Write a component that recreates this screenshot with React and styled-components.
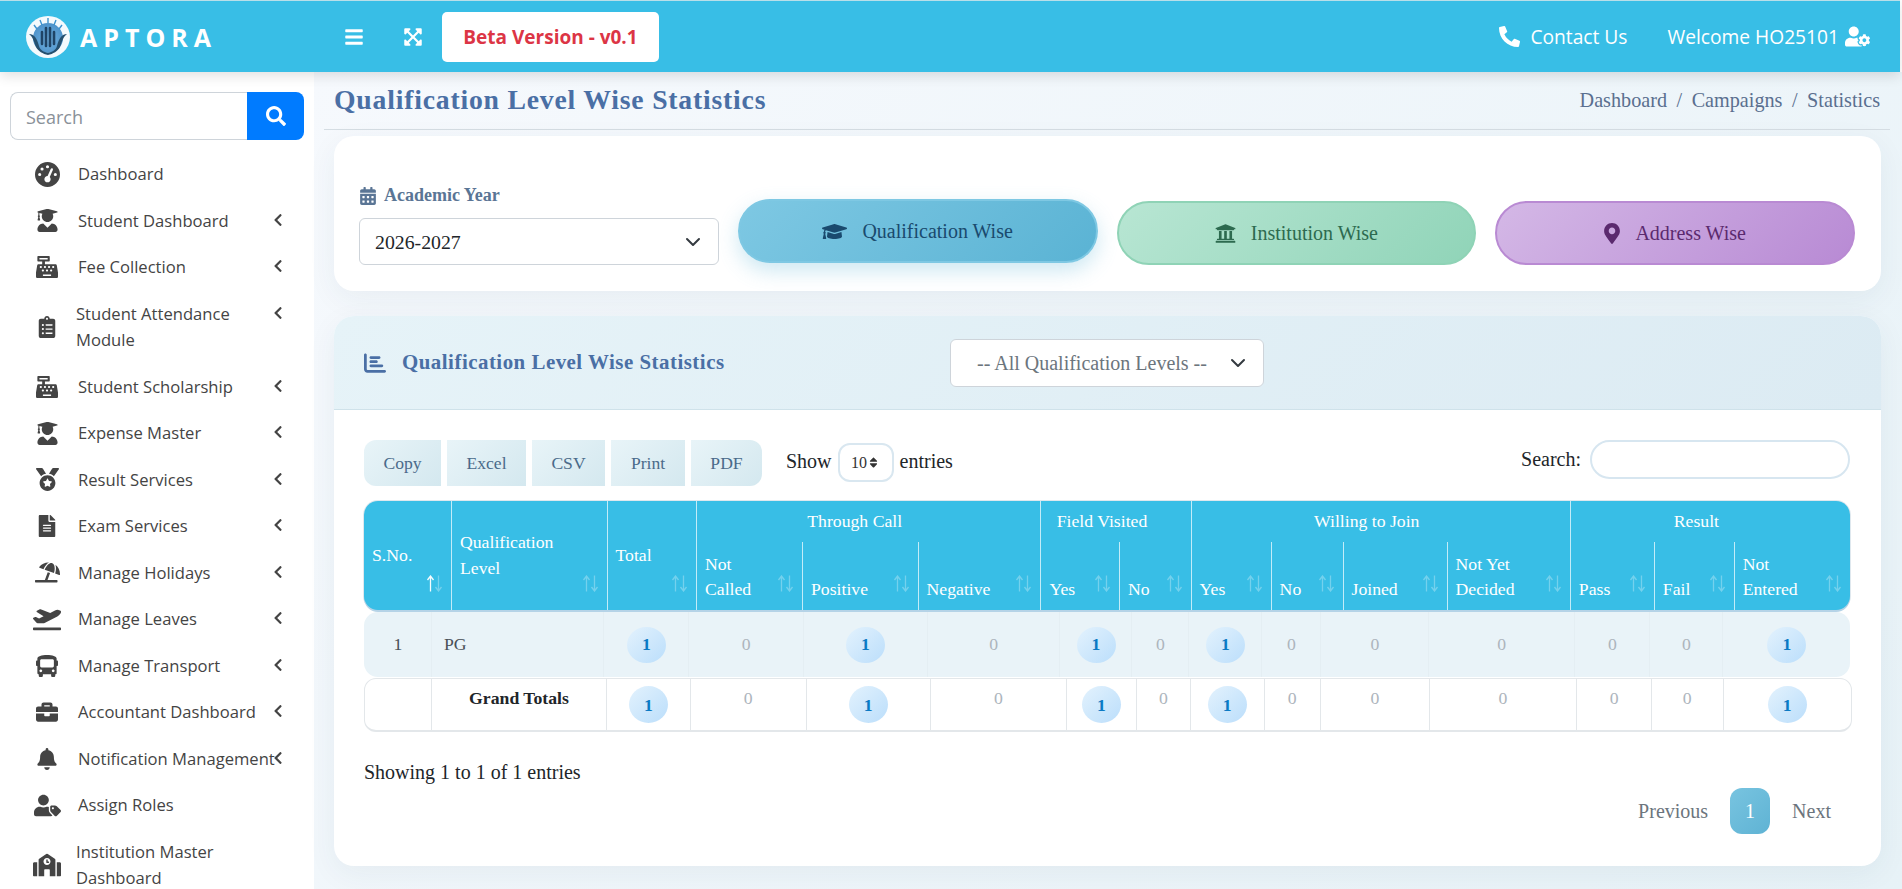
import React from 'react'
import styled, { createGlobalStyle } from 'styled-components'
import {
  FaBars, FaExpandArrowsAlt, FaPhoneAlt, FaUserCog, FaSearch, FaUserGraduate,
  FaCashRegister, FaClipboardList, FaMedal, FaFileAlt, FaUmbrellaBeach, FaPlaneDeparture, FaBus,
  FaBriefcase, FaBell, FaUserTag, FaSchool, FaChevronLeft, FaCalendarAlt, FaGraduationCap,
  FaUniversity, FaMapMarkerAlt, FaSort,
} from 'react-icons/fa'
import { FaGaugeHigh, FaChartBar } from 'react-icons/fa6'

const SERIF = '"Liberation Serif", "Times New Roman", serif'
const SANS = '"Open Sans", "Noto Sans", sans-serif'
const chevron =
  "url(\"data:image/svg+xml,%3csvg xmlns='http://www.w3.org/2000/svg' viewBox='0 0 16 16'%3e%3cpath fill='none' stroke='%23343a40' stroke-linecap='round' stroke-linejoin='round' stroke-width='2' d='m2 5 6 6 6-6'/%3e%3c/svg%3e\")"

const Global = createGlobalStyle`
  html, body { margin: 0; padding: 0; height: 100%; overflow: hidden; background: #fff; }
  * { box-sizing: border-box; }
`

const Shell = styled.div`
  height: 100vh;
  display: flex;
  flex-direction: column;
  font-family: ${SERIF};
`

const Navbar = styled.header`
  flex: 0 0 72px;
  margin-right: 2px;
  display: flex;
  align-items: center;
  background: #38bee6;
  border-top: 1px solid #b9dfe9;
  box-shadow: 0 4px 12px rgba(0, 0, 0, 0.12);
  position: relative;
  z-index: 3;
  color: #fff;
  font-family: ${SANS};
`

const Brand = styled.div`
  width: 344px;
  padding-left: 26px;
  display: flex;
  align-items: center;
  gap: 10px;
`

const BrandName = styled.span`
  font-size: 25px;
  font-weight: 700;
  letter-spacing: 6px;
`

const NavIcon = styled.span`
  display: flex;
  width: 59px;
  font-size: 20px;
`

const BetaTag = styled.div`
  width: 217px;
  height: 50px;
  margin-left: -20px;
  display: flex;
  align-items: center;
  justify-content: center;
  background: #fff;
  border-radius: 5px;
  color: #dc3545;
  font-size: 19px;
  font-weight: 700;
`

const NavRight = styled.div`
  margin-left: auto;
  padding-right: 30px;
  display: flex;
  align-items: center;
  gap: 40px;
  font-size: 19.2px;
`

const NavLink = styled.span`
  display: flex;
  align-items: center;
  gap: ${(p) => p.$gap}px;
`

const Body = styled.div`
  flex: 1;
  display: flex;
  min-height: 0;
`

const Sidebar = styled.aside`
  flex: 0 0 314px;
  background: #fff;
  padding: 20px 10px 0;
  overflow: hidden;
  font-family: ${SANS};
`

const SearchBox = styled.div`
  display: flex;
  height: 48px;
  margin-bottom: 11px;
`

const SearchInput = styled.input`
  flex: 1;
  min-width: 0;
  padding: 2px 15px 0;
  border: 1px solid #ced4da;
  border-right: 0;
  border-radius: 8px 0 0 8px;
  font-family: ${SANS};
  font-size: 18px;
  &::placeholder { color: #8a9199; }
`

const SearchButton = styled.button`
  flex: 0 0 57px;
  display: flex;
  align-items: center;
  justify-content: center;
  border: 0;
  border-radius: 0 8px 8px 0;
  background: #007bff;
  color: #fff;
  font-size: 20px;
`

const MenuList = styled.nav`
  display: flex;
  flex-direction: column;
`

const MenuItem = styled.a`
  position: relative;
  display: flex;
  align-items: center;
  padding: 10px 0 10px 22px;
  color: #444;
  font-size: 16.6px;
  line-height: 26.5px;
`

const MenuIcon = styled.span`
  flex: 0 0 30px;
  height: 26px;
  display: flex;
  align-items: center;
  justify-content: center;
  margin-right: ${(p) => (p.$tall ? 14 : 16)}px;
  font-size: ${(p) => p.$size}px;
`

const MenuLabel = styled.span`
  width: 205px;
  flex: none;
  white-space: ${(p) => (p.$tall ? 'normal' : 'nowrap')};
`

const MenuArrow = styled.span`
  position: absolute;
  left: 261px;
  top: 15px;
  font-size: 14px;
  display: flex;
`

const Main = styled.main`
  flex: 1;
  min-width: 0;
  padding: 0 12px 0 10px;
  background: linear-gradient(135deg, #f6f9fd 0%, #e7f2f7 100%);
`

const PageHead = styled.div`
  height: 58px;
  padding: 0 10px;
  display: flex;
  align-items: center;
  justify-content: space-between;
  border-bottom: 1px solid #d5dde3;
`

const PageTitle = styled.h1`
  margin: 0 0 2px;
  font-size: 27.7px;
  font-weight: 700;
  letter-spacing: 0.8px;
  color: #4a6fa5;
`

const Crumbs = styled.div`
  display: flex;
  gap: 9.5px;
  font-size: 20.2px;
  color: #5a6f8f;
`

const Card = styled.section`
  margin: 6px 9px 25px 10px;
  background: #fff;
  border-radius: 20px;
  box-shadow: 0 8px 30px rgba(40, 70, 90, 0.06);
`

const FilterGrid = styled(Card)`
  height: 155px;
  padding: 0 26px 26px 25px;
  display: grid;
  grid-template-columns: repeat(4, 1fr);
  gap: 19px;
  align-items: end;
`

const FilterLabel = styled.label`
  display: flex;
  align-items: center;
  gap: 7px;
  margin-bottom: 12px;
  color: #5a7595;
  font-size: 18px;
  font-weight: 700;
`

const YearSelect = styled.select`
  width: 100%;
  height: 47px;
  padding: 0 15px;
  appearance: none;
  border: 1px solid #ced4da;
  border-radius: 6px;
  background: #fff ${chevron} no-repeat right 17px center / 16px 16px;
  color: #212529;
  font-family: ${SERIF};
  font-size: 19.8px;
`

const PALETTE = {
  blue: ['#7ec8e3', '#5ab3d4', '#7ec8e3', '#1a4a6e', '0 8px 20px rgba(90, 179, 212, 0.3)', '-2px'],
  green: ['#b8e6d3', '#90d4b8', '#8fd3b6', '#2d6a4f', 'none', '0'],
  purple: ['#d4b8e6', '#b88ad4', '#b98ad3', '#5b2a6e', 'none', '0'],
}

const ModeButton = styled.button`
  height: 64px;
  display: flex;
  align-items: center;
  justify-content: center;
  gap: 15px;
  border-radius: 32px;
  border: 2px solid ${(p) => PALETTE[p.$tone][2]};
  background: linear-gradient(135deg, ${(p) => PALETTE[p.$tone][0]}, ${(p) => PALETTE[p.$tone][1]});
  box-shadow: ${(p) => PALETTE[p.$tone][4]};
  transform: translateY(${(p) => PALETTE[p.$tone][5]});
  color: ${(p) => PALETTE[p.$tone][3]};
  font-family: ${SERIF};
  font-size: 20px;
`

const PinIcon = styled(FaMapMarkerAlt)`
  width: 16px;
  height: 21px;
`

const StatsCard = styled(Card)`
  height: 550px;
  margin-bottom: 0;
  overflow: hidden;
`

const StatsHead = styled.div`
  height: 94px;
  padding-left: 30px;
  display: flex;
  align-items: center;
  background: linear-gradient(135deg, #e6f3f8, #dcebf3);
  border-bottom: 1px solid #cfe2ea;
`

const StatsTitle = styled.h2`
  width: 549px;
  margin: 0;
  display: flex;
  align-items: center;
  gap: 16px;
  font-size: 20.9px;
  font-weight: 700;
  letter-spacing: 0.5px;
  color: #4a6fa5;
`

const LevelSelect = styled.select`
  width: 314px;
  height: 48px;
  margin-left: 37px;
  padding: 0 26px;
  appearance: none;
  border: 1px solid #ced4da;
  border-radius: 6px;
  background: #fff ${chevron} no-repeat right 17px center / 16px 16px;
  color: #6c757d;
  font-family: ${SERIF};
  font-size: 20px;
`

const StatsBody = styled.div`
  padding: 30px 31px 0 30px;
`

const Toolbar = styled.div`
  height: 46px;
  margin-bottom: 15px;
  display: flex;
  align-items: flex-start;
`

const ExportGroup = styled.div`
  display: flex;
  gap: 6px;
`

const ExportButton = styled.button`
  height: 46px;
  width: ${(p) => p.$w}px;
  border: 0;
  border-radius: ${(p) => (p.$first ? '12px 0 0 12px' : p.$last ? '0 12px 12px 0' : '0')};
  background: linear-gradient(135deg, #e8f4f8, #d4e8ef);
  color: #4a6a8a;
  font-family: ${SERIF};
  font-size: 17.6px;
`

const LengthControl = styled.div`
  margin-left: 24px;
  height: 39px;
  margin-top: 1px;
  display: flex;
  align-items: center;
  gap: 6px;
  color: #212529;
  font-size: 20px;
  line-height: 36px;
`

const LengthBox = styled.span`
  width: 56px;
  height: 39px;
  margin-top: 4px;
  display: flex;
  align-items: center;
  justify-content: center;
  border: 2px solid #d9e7f0;
  border-radius: 12px;
  color: #333;
  font-size: 16px;
`

const TableSearch = styled.div`
  margin-left: auto;
  height: 39px;
  display: flex;
  align-items: center;
  gap: 9px;
  color: #212529;
  font-size: 20px;
`

const TableSearchInput = styled.input`
  width: 260px;
  height: 39px;
  border: 2px solid #d7e6f0;
  border-radius: 20px;
  background: #fff;
`

const FixedTable = styled.table`
  width: 100%;
  table-layout: fixed;
  border-collapse: separate;
  border-spacing: 0;
`

const Col = styled.col`
  width: ${(p) => p.$w}px;
`

const HeadTable = styled(FixedTable)`
  height: 109px;
  background: #38bee6;
  border-radius: 14px;
  box-shadow: 0 2px 0 #b5d3e7, 0 0 0 1px #dfe8ee;
  color: #fff;
`

const HeadCell = styled.th`
  position: relative;
  padding: 0 30px 0 8px;
  font-weight: 400;
  font-size: 17.7px;
  line-height: 25.6px;
  text-align: left;
  vertical-align: ${(p) => (p.$bottom ? 'bottom' : 'middle')};
  padding-bottom: ${(p) => (p.$bottom ? 7 : 0)}px;
  border-right: 1px solid rgba(255, 255, 255, 0.7);
  &:last-child { border-right: 0; }
`

const GroupCell = styled(HeadCell)`
  padding: 0 36px 0 8px;
  text-align: center;
  height: 41px;
`

const SortMark = styled.svg`
  position: absolute;
  right: 8px;
  bottom: 18px;
  width: 17px;
  height: 17px;
  fill: none;
  stroke: #fff;
  stroke-width: 1.3;
`

const SortPath = styled.path`
  opacity: ${(p) => (p.$active ? 0.95 : 0.3)};
`

const RowTable = styled(FixedTable)`
  margin-top: 2px;
  height: 65px;
  background: #e9f3f8;
  border-radius: 14px;
  color: #495057;
`

const TotalsTable = styled(FixedTable)`
  height: 54px;
  margin-top: 1px;
  background: #fff;
  border: 1px solid #e3e7ea;
  border-bottom-width: 2px;
  border-radius: 12px;
  color: #adb5bd;
`

const DataCell = styled.td`
  padding: 0;
  font-size: 17.7px;
  text-align: ${(p) => (p.$left ? 'left' : 'center')};
  padding-left: ${(p) => (p.$left ? 12 : 1)}px;
  color: ${(p) => (p.$zero ? '#adb5bd' : '#495057')};
  border-right: 1px solid #e4eef3;
  &:last-child { border-right: 0; }
`

const TotalCell = styled.td`
  padding: 7px 0 0;
  vertical-align: top;
  text-align: center;
  font-size: 17.7px;
  line-height: 24px;
  color: ${(p) => (p.$strong ? '#212529' : '#adb5bd')};
  font-weight: ${(p) => (p.$strong ? 700 : 400)};
  border-right: 1px solid #e3e7ea;
  &:last-child { border-right: 0; }
`

const Badge = styled.span`
  display: inline-flex;
  align-items: center;
  justify-content: center;
  width: 39px;
  height: ${(p) => p.$h}px;
  border-radius: 50%;
  background: linear-gradient(135deg, #e3f2fd, #bbdefb);
  color: #0a7ac4;
  font-size: 17.7px;
  font-weight: 700;
  vertical-align: middle;
`

const TableInfo = styled.div`
  margin-top: 28px;
  color: #212529;
  font-size: 20px;
  line-height: 24px;
`

const Pager = styled.div`
  margin: 4px -3px 0 0;
  display: flex;
  justify-content: flex-end;
  align-items: center;
  color: #6c757d;
  font-size: 20px;
`

const PagerLink = styled.span`
  padding: 0 22px;
`

const PagerActive = styled.span`
  width: 40px;
  height: 46px;
  display: flex;
  align-items: center;
  justify-content: center;
  border-radius: 12px;
  background: linear-gradient(135deg, #78c4e0, #5fb3d4);
  color: #fff;
`

const MENU = [
  { label: 'Dashboard', icon: FaGaugeHigh, size: 25 },
  { label: 'Student Dashboard', icon: FaUserGraduate, size: 23, arrow: true },
  { label: 'Fee Collection', icon: FaCashRegister, size: 22, arrow: true },
  { label: 'Student Attendance Module', icon: FaClipboardList, size: 22, arrow: true, tall: true },
  { label: 'Student Scholarship', icon: FaCashRegister, size: 22, arrow: true },
  { label: 'Expense Master', icon: FaUserGraduate, size: 23, arrow: true },
  { label: 'Result Services', icon: FaMedal, size: 23, arrow: true },
  { label: 'Exam Services', icon: FaFileAlt, size: 22, arrow: true },
  { label: 'Manage Holidays', icon: FaUmbrellaBeach, size: 25, arrow: true },
  { label: 'Manage Leaves', icon: FaPlaneDeparture, size: 28, arrow: true },
  { label: 'Manage Transport', icon: FaBus, size: 22, arrow: true },
  { label: 'Accountant Dashboard', icon: FaBriefcase, size: 22, arrow: true },
  { label: 'Notification Management', icon: FaBell, size: 22, arrow: true },
  { label: 'Assign Roles', icon: FaUserTag, size: 27 },
  { label: 'Institution Master Dashboard', icon: FaSchool, size: 28, tall: true },
]

const HEAD_COLS = [88, 155.5, 89.5, 106, 115.6, 122.8, 78.6, 71.6, 80, 71.9, 104.1, 123.2, 84, 79.9, 115.3]
const ROW_COLS = [68, 172, 85, 114.5, 124, 132.5, 72, 57, 73, 59, 107.6, 146.4, 75, 73, 127]
const TOTAL_COLS = [67, 175, 84, 115.5, 124.5, 136, 70, 54, 73.5, 56.5, 108.6, 147.9, 74.5, 71.6, 127.4]
const VALUES = [1, 0, 1, 0, 1, 0, 1, 0, 0, 0, 0, 0, 1]
const SUB_HEADS = ['Not Called', 'Positive', 'Negative', 'Yes', 'No', 'Yes', 'No', 'Joined', 'Not Yet Decided', 'Pass', 'Fail', 'Not Entered']

function LogoMark() {
  return (
    <svg width="44" height="42" viewBox="0 0 44 42">
      <defs>
        <radialGradient id="logoCore" cx="50%" cy="55%" r="55%">
          <stop offset="0%" stopColor="#5aa5dc" />
          <stop offset="100%" stopColor="#2f7fc0" />
        </radialGradient>
      </defs>
      <ellipse cx="22" cy="21" rx="22" ry="21" fill="#f4fafd" />
      <ellipse cx="22" cy="22" rx="15" ry="15" fill="url(#logoCore)" opacity="0.85" />
      <g stroke="#3c93cf" strokeWidth="1.4">
        <path d="M22 2v5M14 4l2 5M30 4l-2 5M8 9l3 4M36 9l-3 4" />
      </g>
      <g stroke="#1f4466" strokeWidth="2.6" strokeLinecap="round">
        <path d="M16 28V16M20 30V12M24 30V12M28 28V16" />
      </g>
      <path d="M3 18c5 0 8 4 10 12 1 4 5 6 9 7 4-1 8-3 9-7 2-8 5-12 10-12-4 3-5 8-7 13-2 4-7 7-12 8-5-1-10-4-12-8-2-5-3-10-7-13z" fill="#25506f" />
    </svg>
  )
}

function SortArrows({ active }) {
  return (
    <SortMark viewBox="0 0 17 17">
      <SortPath $active={active} d="M4.5 16.5V1M1.5 5l3-4 3 4" />
      <SortPath d="M12.5 0.5V16M9.5 12l3 4 3-4" />
    </SortMark>
  )
}

function Menu() {
  return (
    <MenuList>
      {MENU.map((item) => (
        <MenuItem key={item.label}>
          <MenuIcon $tall={item.tall} $size={item.size}>
            <item.icon />
          </MenuIcon>
          <MenuLabel $tall={item.tall}>{item.label}</MenuLabel>
          {item.arrow && (
            <MenuArrow>
              <FaChevronLeft />
            </MenuArrow>
          )}
        </MenuItem>
      ))}
    </MenuList>
  )
}

function StatsTable() {
  return (
    <>
      <HeadTable>
        <colgroup>
          {HEAD_COLS.map((w, i) => (
            <Col key={i} $w={w} />
          ))}
        </colgroup>
        <thead>
          <tr>
            <HeadCell rowSpan={2}>S.No.<SortArrows active /></HeadCell>
            <HeadCell rowSpan={2}>Qualification Level<SortArrows /></HeadCell>
            <HeadCell rowSpan={2}>Total<SortArrows /></HeadCell>
            <GroupCell colSpan={3}>Through Call</GroupCell>
            <GroupCell colSpan={2}>Field Visited</GroupCell>
            <GroupCell colSpan={4}>Willing to Join</GroupCell>
            <GroupCell colSpan={3}>Result</GroupCell>
          </tr>
          <tr>
            {SUB_HEADS.map((h, i) => (
              <HeadCell key={i} $bottom>
                {h}
                <SortArrows />
              </HeadCell>
            ))}
          </tr>
        </thead>
      </HeadTable>
      <RowTable>
        <colgroup>
          {ROW_COLS.map((w, i) => (
            <Col key={i} $w={w} />
          ))}
        </colgroup>
        <tbody>
          <tr>
            <DataCell>1</DataCell>
            <DataCell $left>PG</DataCell>
            {VALUES.map((v, i) => (
              <DataCell key={i} $zero={!v}>
                {v ? <Badge $h={36}>{v}</Badge> : v}
              </DataCell>
            ))}
          </tr>
        </tbody>
      </RowTable>
      <TotalsTable>
        <colgroup>
          {TOTAL_COLS.map((w, i) => (
            <Col key={i} $w={w} />
          ))}
        </colgroup>
        <tbody>
          <tr>
            <TotalCell />
            <TotalCell $strong>Grand Totals</TotalCell>
            {VALUES.map((v, i) => (
              <TotalCell key={i}>{v ? <Badge $h={37}>{v}</Badge> : v}</TotalCell>
            ))}
          </tr>
        </tbody>
      </TotalsTable>
    </>
  )
}

export default function App() {
  return (
    <>
      <Global />
      <Shell>
        <Navbar>
          <Brand>
            <LogoMark />
            <BrandName>APTORA</BrandName>
          </Brand>
          <NavIcon><FaBars /></NavIcon>
          <NavIcon><FaExpandArrowsAlt /></NavIcon>
          <BetaTag>Beta Version - v0.1</BetaTag>
          <NavRight>
            <NavLink $gap={10}>
              <FaPhoneAlt size={21} />
              Contact Us
            </NavLink>
            <NavLink $gap={6}>
              Welcome HO25101
              <FaUserCog size={25} />
            </NavLink>
          </NavRight>
        </Navbar>
        <Body>
          <Sidebar>
            <SearchBox>
              <SearchInput placeholder="Search" />
              <SearchButton><FaSearch /></SearchButton>
            </SearchBox>
            <Menu />
          </Sidebar>
          <Main>
            <PageHead>
              <PageTitle>Qualification Level Wise Statistics</PageTitle>
              <Crumbs>
                <span>Dashboard</span><span>/</span>
                <span>Campaigns</span><span>/</span>
                <span>Statistics</span>
              </Crumbs>
            </PageHead>
            <FilterGrid>
              <div>
                <FilterLabel><FaCalendarAlt size={18} /> Academic Year</FilterLabel>
                <YearSelect defaultValue="2026-2027">
                  <option>2026-2027</option>
                </YearSelect>
              </div>
              <ModeButton $tone="blue"><FaGraduationCap size={25} /> Qualification Wise</ModeButton>
              <ModeButton $tone="green"><FaUniversity size={21} /> Institution Wise</ModeButton>
              <ModeButton $tone="purple"><PinIcon /> Address Wise</ModeButton>
            </FilterGrid>
            <StatsCard>
              <StatsHead>
                <StatsTitle><FaChartBar size={22} /> Qualification Level Wise Statistics</StatsTitle>
                <LevelSelect>
                  <option>-- All Qualification Levels --</option>
                </LevelSelect>
              </StatsHead>
              <StatsBody>
                <Toolbar>
                  <ExportGroup>
                    <ExportButton $first $w={77}>Copy</ExportButton>
                    <ExportButton $w={79}>Excel</ExportButton>
                    <ExportButton $w={73}>CSV</ExportButton>
                    <ExportButton $w={74}>Print</ExportButton>
                    <ExportButton $last $w={71}>PDF</ExportButton>
                  </ExportGroup>
                  <LengthControl>
                    Show
                    <LengthBox>10<FaSort size={13} /></LengthBox>
                    entries
                  </LengthControl>
                  <TableSearch>
                    Search:
                    <TableSearchInput />
                  </TableSearch>
                </Toolbar>
                <StatsTable />
                <TableInfo>Showing 1 to 1 of 1 entries</TableInfo>
                <Pager>
                  <PagerLink>Previous</PagerLink>
                  <PagerActive>1</PagerActive>
                  <PagerLink>Next</PagerLink>
                </Pager>
              </StatsBody>
            </StatsCard>
          </Main>
        </Body>
      </Shell>
    </>
  )
}
